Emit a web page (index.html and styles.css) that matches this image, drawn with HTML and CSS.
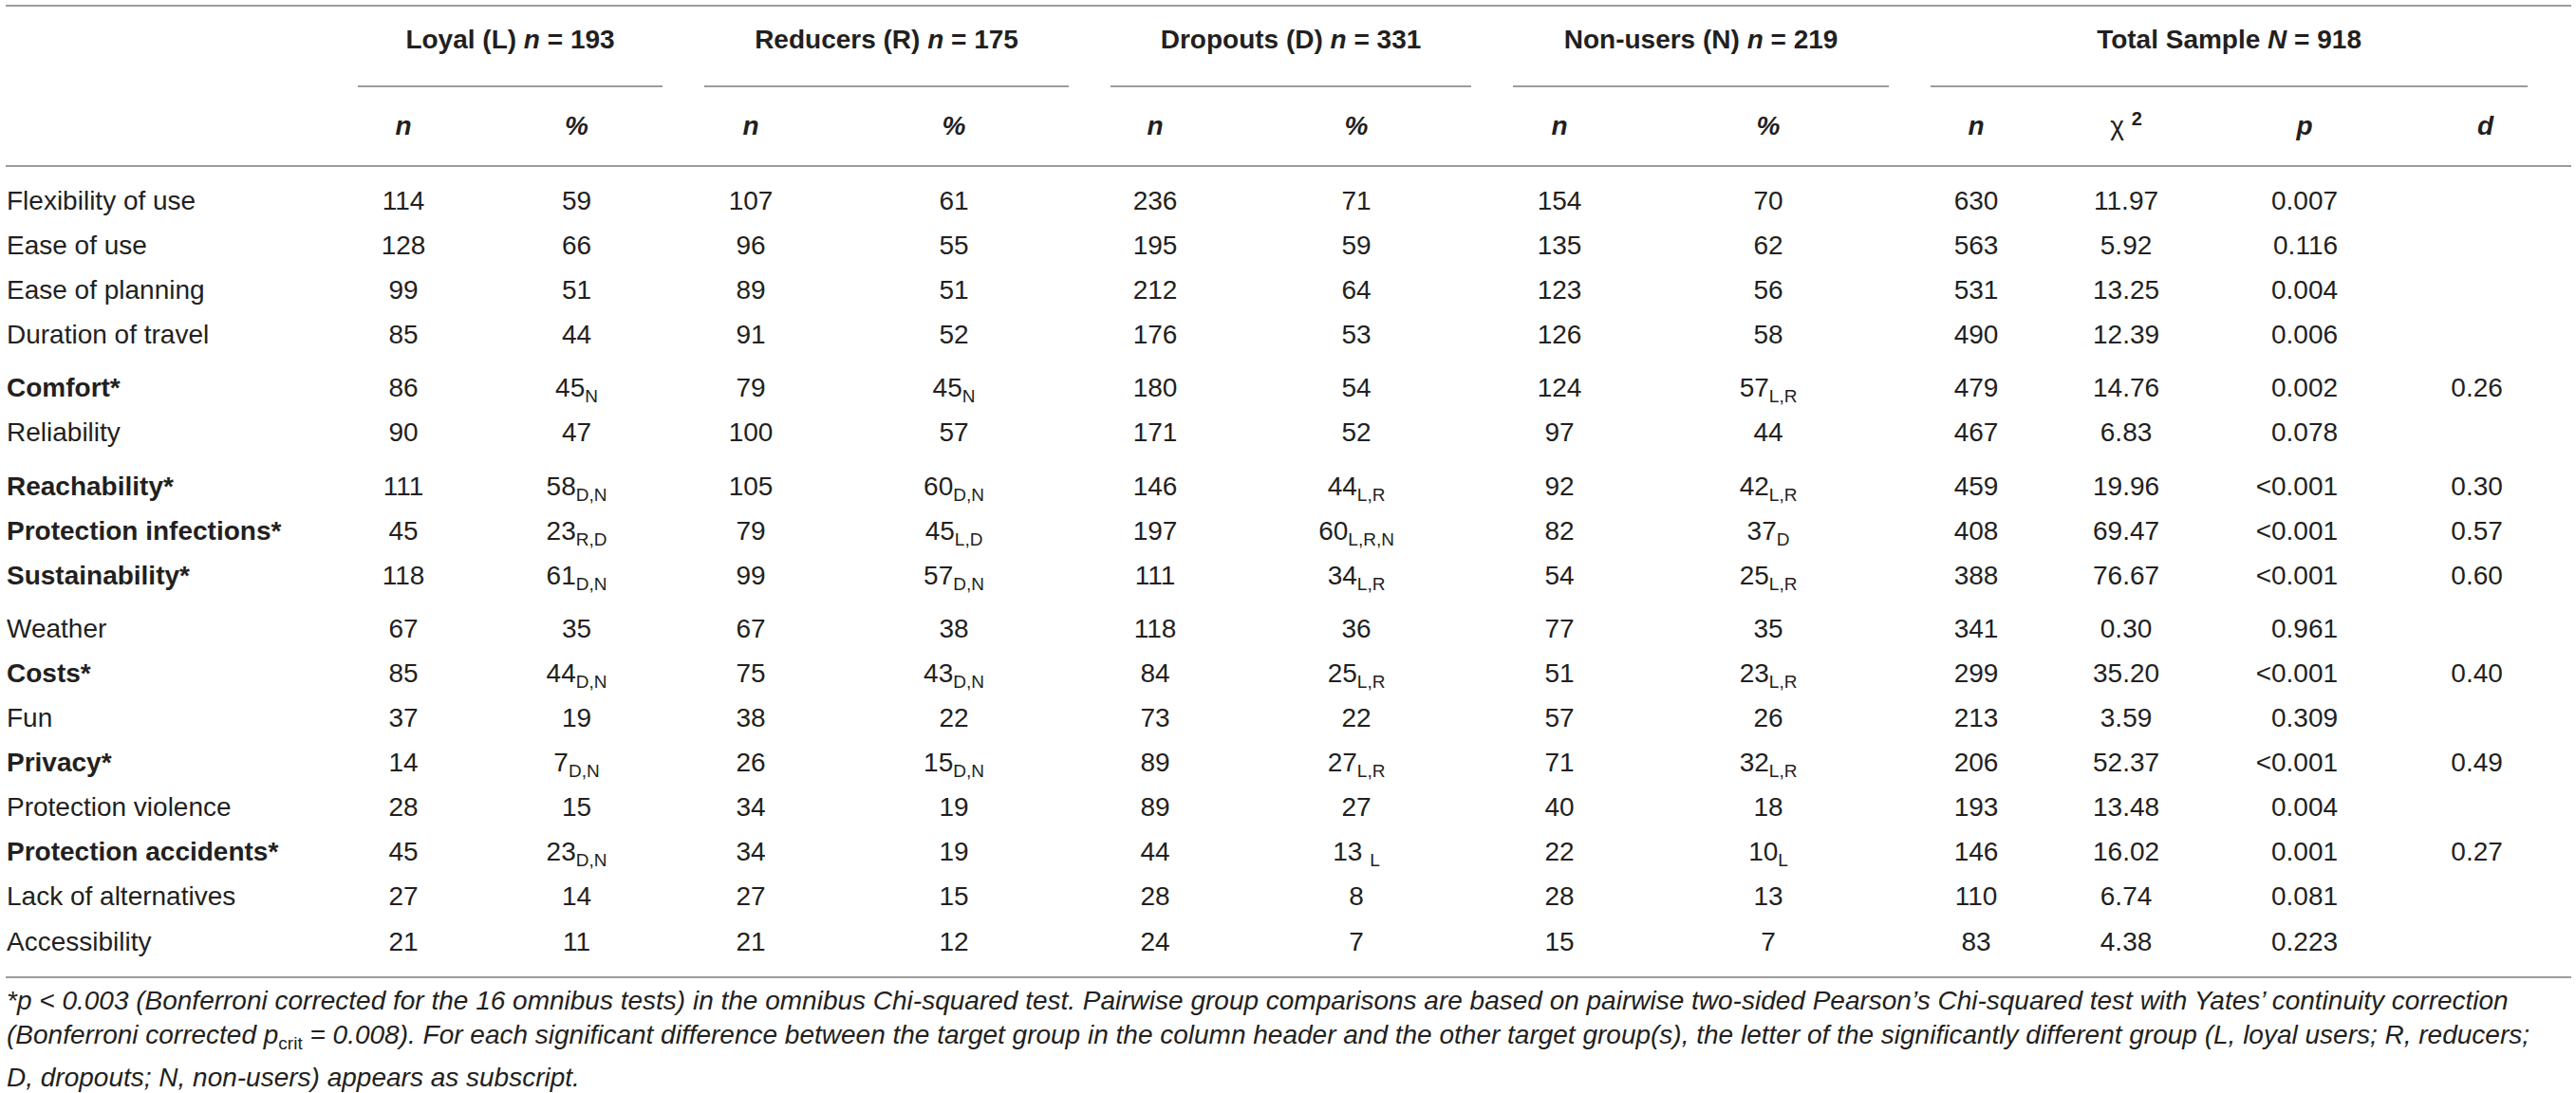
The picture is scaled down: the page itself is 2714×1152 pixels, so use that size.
FILE: index.html
```html
<!DOCTYPE html>
<html lang="en">
<head>
<meta charset="utf-8">
<title>Table</title>
<link rel="stylesheet" href="styles.css">
</head>
<body>
<div class="wrap">
<table class="tbl">
<colgroup>
<col class="c-lab"><col class="c-ln"><col class="c-lp"><col class="c-rn"><col class="c-rp"><col class="c-dn"><col class="c-dp"><col class="c-nn"><col class="c-np"><col class="c-tn"><col class="c-chi"><col class="c-p"><col class="c-d">
</colgroup>
<thead>
<tr class="grp">
<th class="lab" rowspan="2"></th>
<th colspan="2"><div class="gl">Loyal (L) <i>n</i> = 193</div></th>
<th colspan="2"><div class="gl">Reducers (R) <i>n</i> = 175</div></th>
<th colspan="2"><div class="gl">Dropouts (D) <i>n</i> = 331</div></th>
<th colspan="2"><div class="gl">Non-users (N) <i>n</i> = 219</div></th>
<th colspan="4"><div class="gl gl-tot">Total Sample <i>N</i> = 918</div></th>
</tr>
<tr class="sub-h">
<th><i>n</i></th><th><i>%</i></th>
<th><i>n</i></th><th><i>%</i></th>
<th><i>n</i></th><th><i>%</i></th>
<th><i>n</i></th><th><i>%</i></th>
<th><i>n</i></th><th><span class="chi">χ</span> <sup class="sq">2</sup></th><th><i>p</i></th><th class="dcol"><i>d</i></th>
</tr>
</thead>
<tbody>
<tr><td class="lab">Flexibility of use</td><td>114</td><td>59</td><td>107</td><td>61</td><td>236</td><td>71</td><td>154</td><td>70</td><td>630</td><td>11.97</td><td class="pv">0.007</td><td class="dcol"></td></tr>
<tr><td class="lab">Ease of use</td><td>128</td><td>66</td><td>96</td><td>55</td><td>195</td><td>59</td><td>135</td><td>62</td><td>563</td><td>5.92</td><td class="pv">0.116</td><td class="dcol"></td></tr>
<tr><td class="lab">Ease of planning</td><td>99</td><td>51</td><td>89</td><td>51</td><td>212</td><td>64</td><td>123</td><td>56</td><td>531</td><td>13.25</td><td class="pv">0.004</td><td class="dcol"></td></tr>
<tr><td class="lab">Duration of travel</td><td>85</td><td>44</td><td>91</td><td>52</td><td>176</td><td>53</td><td>126</td><td>58</td><td>490</td><td>12.39</td><td class="pv">0.006</td><td class="dcol"></td></tr>
<tr class="gap"><td class="lab"><b>Comfort*</b></td><td>86</td><td>45<sub class="s">N</sub></td><td>79</td><td>45<sub class="s">N</sub></td><td>180</td><td>54</td><td>124</td><td>57<sub class="s">L,R</sub></td><td>479</td><td>14.76</td><td class="pv">0.002</td><td class="dcol">0.26</td></tr>
<tr><td class="lab">Reliability</td><td>90</td><td>47</td><td>100</td><td>57</td><td>171</td><td>52</td><td>97</td><td>44</td><td>467</td><td>6.83</td><td class="pv">0.078</td><td class="dcol"></td></tr>
<tr class="gap"><td class="lab"><b>Reachability*</b></td><td>111</td><td>58<sub class="s">D,N</sub></td><td>105</td><td>60<sub class="s">D,N</sub></td><td>146</td><td>44<sub class="s">L,R</sub></td><td>92</td><td>42<sub class="s">L,R</sub></td><td>459</td><td>19.96</td><td class="pv">&lt;0.001</td><td class="dcol">0.30</td></tr>
<tr><td class="lab"><b>Protection infections*</b></td><td>45</td><td>23<sub class="s">R,D</sub></td><td>79</td><td>45<sub class="s">L,D</sub></td><td>197</td><td>60<sub class="s">L,R,N</sub></td><td>82</td><td>37<sub class="s">D</sub></td><td>408</td><td>69.47</td><td class="pv">&lt;0.001</td><td class="dcol">0.57</td></tr>
<tr><td class="lab"><b>Sustainability*</b></td><td>118</td><td>61<sub class="s">D,N</sub></td><td>99</td><td>57<sub class="s">D,N</sub></td><td>111</td><td>34<sub class="s">L,R</sub></td><td>54</td><td>25<sub class="s">L,R</sub></td><td>388</td><td>76.67</td><td class="pv">&lt;0.001</td><td class="dcol">0.60</td></tr>
<tr class="gap"><td class="lab">Weather</td><td>67</td><td>35</td><td>67</td><td>38</td><td>118</td><td>36</td><td>77</td><td>35</td><td>341</td><td>0.30</td><td class="pv">0.961</td><td class="dcol"></td></tr>
<tr><td class="lab"><b>Costs*</b></td><td>85</td><td>44<sub class="s">D,N</sub></td><td>75</td><td>43<sub class="s">D,N</sub></td><td>84</td><td>25<sub class="s">L,R</sub></td><td>51</td><td>23<sub class="s">L,R</sub></td><td>299</td><td>35.20</td><td class="pv">&lt;0.001</td><td class="dcol">0.40</td></tr>
<tr><td class="lab">Fun</td><td>37</td><td>19</td><td>38</td><td>22</td><td>73</td><td>22</td><td>57</td><td>26</td><td>213</td><td>3.59</td><td class="pv">0.309</td><td class="dcol"></td></tr>
<tr><td class="lab"><b>Privacy*</b></td><td>14</td><td>7<sub class="s">D,N</sub></td><td>26</td><td>15<sub class="s">D,N</sub></td><td>89</td><td>27<sub class="s">L,R</sub></td><td>71</td><td>32<sub class="s">L,R</sub></td><td>206</td><td>52.37</td><td class="pv">&lt;0.001</td><td class="dcol">0.49</td></tr>
<tr><td class="lab">Protection violence</td><td>28</td><td>15</td><td>34</td><td>19</td><td>89</td><td>27</td><td>40</td><td>18</td><td>193</td><td>13.48</td><td class="pv">0.004</td><td class="dcol"></td></tr>
<tr><td class="lab"><b>Protection accidents*</b></td><td>45</td><td>23<sub class="s">D,N</sub></td><td>34</td><td>19</td><td>44</td><td>13 <sub class="s">L</sub></td><td>22</td><td>10<sub class="s">L</sub></td><td>146</td><td>16.02</td><td class="pv">0.001</td><td class="dcol">0.27</td></tr>
<tr><td class="lab">Lack of alternatives</td><td>27</td><td>14</td><td>27</td><td>15</td><td>28</td><td>8</td><td>28</td><td>13</td><td>110</td><td>6.74</td><td class="pv">0.081</td><td class="dcol"></td></tr>
<tr class="last"><td class="lab">Accessibility</td><td>21</td><td>11</td><td>21</td><td>12</td><td>24</td><td>7</td><td>15</td><td>7</td><td>83</td><td>4.38</td><td class="pv">0.223</td><td class="dcol"></td></tr>
</tbody>
</table>
<p class="note">*p &lt; 0.003 (Bonferroni corrected for the 16 omnibus tests) in the omnibus Chi-squared test. Pairwise group comparisons are based on pairwise two-sided Pearson’s Chi-squared test with Yates’ continuity correction (Bonferroni corrected p<span class="crit">crit</span> = 0.008). For each significant difference between the target group in the column header and the other target group(s), the letter of the significantly different group (L, loyal users; R, reducers; D,&nbsp;dropouts; N, non-users) appears as subscript.</p>
</div>
</body>
</html>
```

FILE: styles.css
```css
html, body {
  margin: 0;
  padding: 0;
  background: #ffffff;
}

body {
  color: #231f20;
  font-family: "Liberation Sans", Arial, Helvetica, sans-serif;
  font-size: 28px;
}

.wrap {
  width: 2703px;
  padding: 5px 0 0 6px;
}

.tbl {
  width: 2703px;
  table-layout: fixed;
  border-collapse: separate;
  border-spacing: 0;
  border-top: 2px solid #9c9c9c;
}

.c-lab { width: 349px; }
.c-ln { width: 140px; }
.c-lp { width: 225px; }
.c-rn { width: 142px; }
.c-rp { width: 286px; }
.c-dn { width: 138px; }
.c-dp { width: 286px; }
.c-nn { width: 142px; }
.c-np { width: 298px; }
.c-tn { width: 140px; }
.c-chi { width: 176px; }
.c-p { width: 200px; }
.c-d { width: 181px; }

th, td {
  padding: 0;
  line-height: 36px;
  text-align: center;
  white-space: nowrap;
  font-weight: normal;
}

thead th {
  font-weight: bold;
}

.grp th {
  padding-top: 17px;
  vertical-align: top;
}

.gl {
  margin: 0 22px;
  padding-bottom: 30px;
  border-bottom: 2px solid #9c9c9c;
}

.gl-tot {
  margin: 0 46px 0 22px;
}

.sub-h th {
  padding: 23px 0 23px;
  border-bottom: 2px solid #9c9c9c;
}

thead th.lab {
  border-bottom: 2px solid #9c9c9c;
}

.chi {
  font-weight: normal;
}

.sq {
  font-size: 20px;
  vertical-align: 10px;
  line-height: 0;
}

td {
  padding-top: 6px;
  padding-bottom: 5.1px;
}

tbody tr:first-child td {
  padding-top: 18px;
}

tr.gap td {
  padding-top: 15px;
}

tr.last td {
  padding-bottom: 18px;
  border-bottom: 2px solid #9c9c9c;
}

td.lab {
  text-align: left;
  padding-left: 1px;
}

td.pv {
  text-align: right;
  padding-right: 65px;
}

.dcol {
  padding-right: 18px;
}

.s {
  font-size: 19px;
  line-height: 0;
  vertical-align: -6px;
}

.note {
  margin: 6px 0 0;
  padding-left: 1px;
  font-style: italic;
  line-height: 36px;
  font-size: 28px;
}

.crit {
  font-style: normal;
  font-size: 19px;
  vertical-align: -6px;
}
```
